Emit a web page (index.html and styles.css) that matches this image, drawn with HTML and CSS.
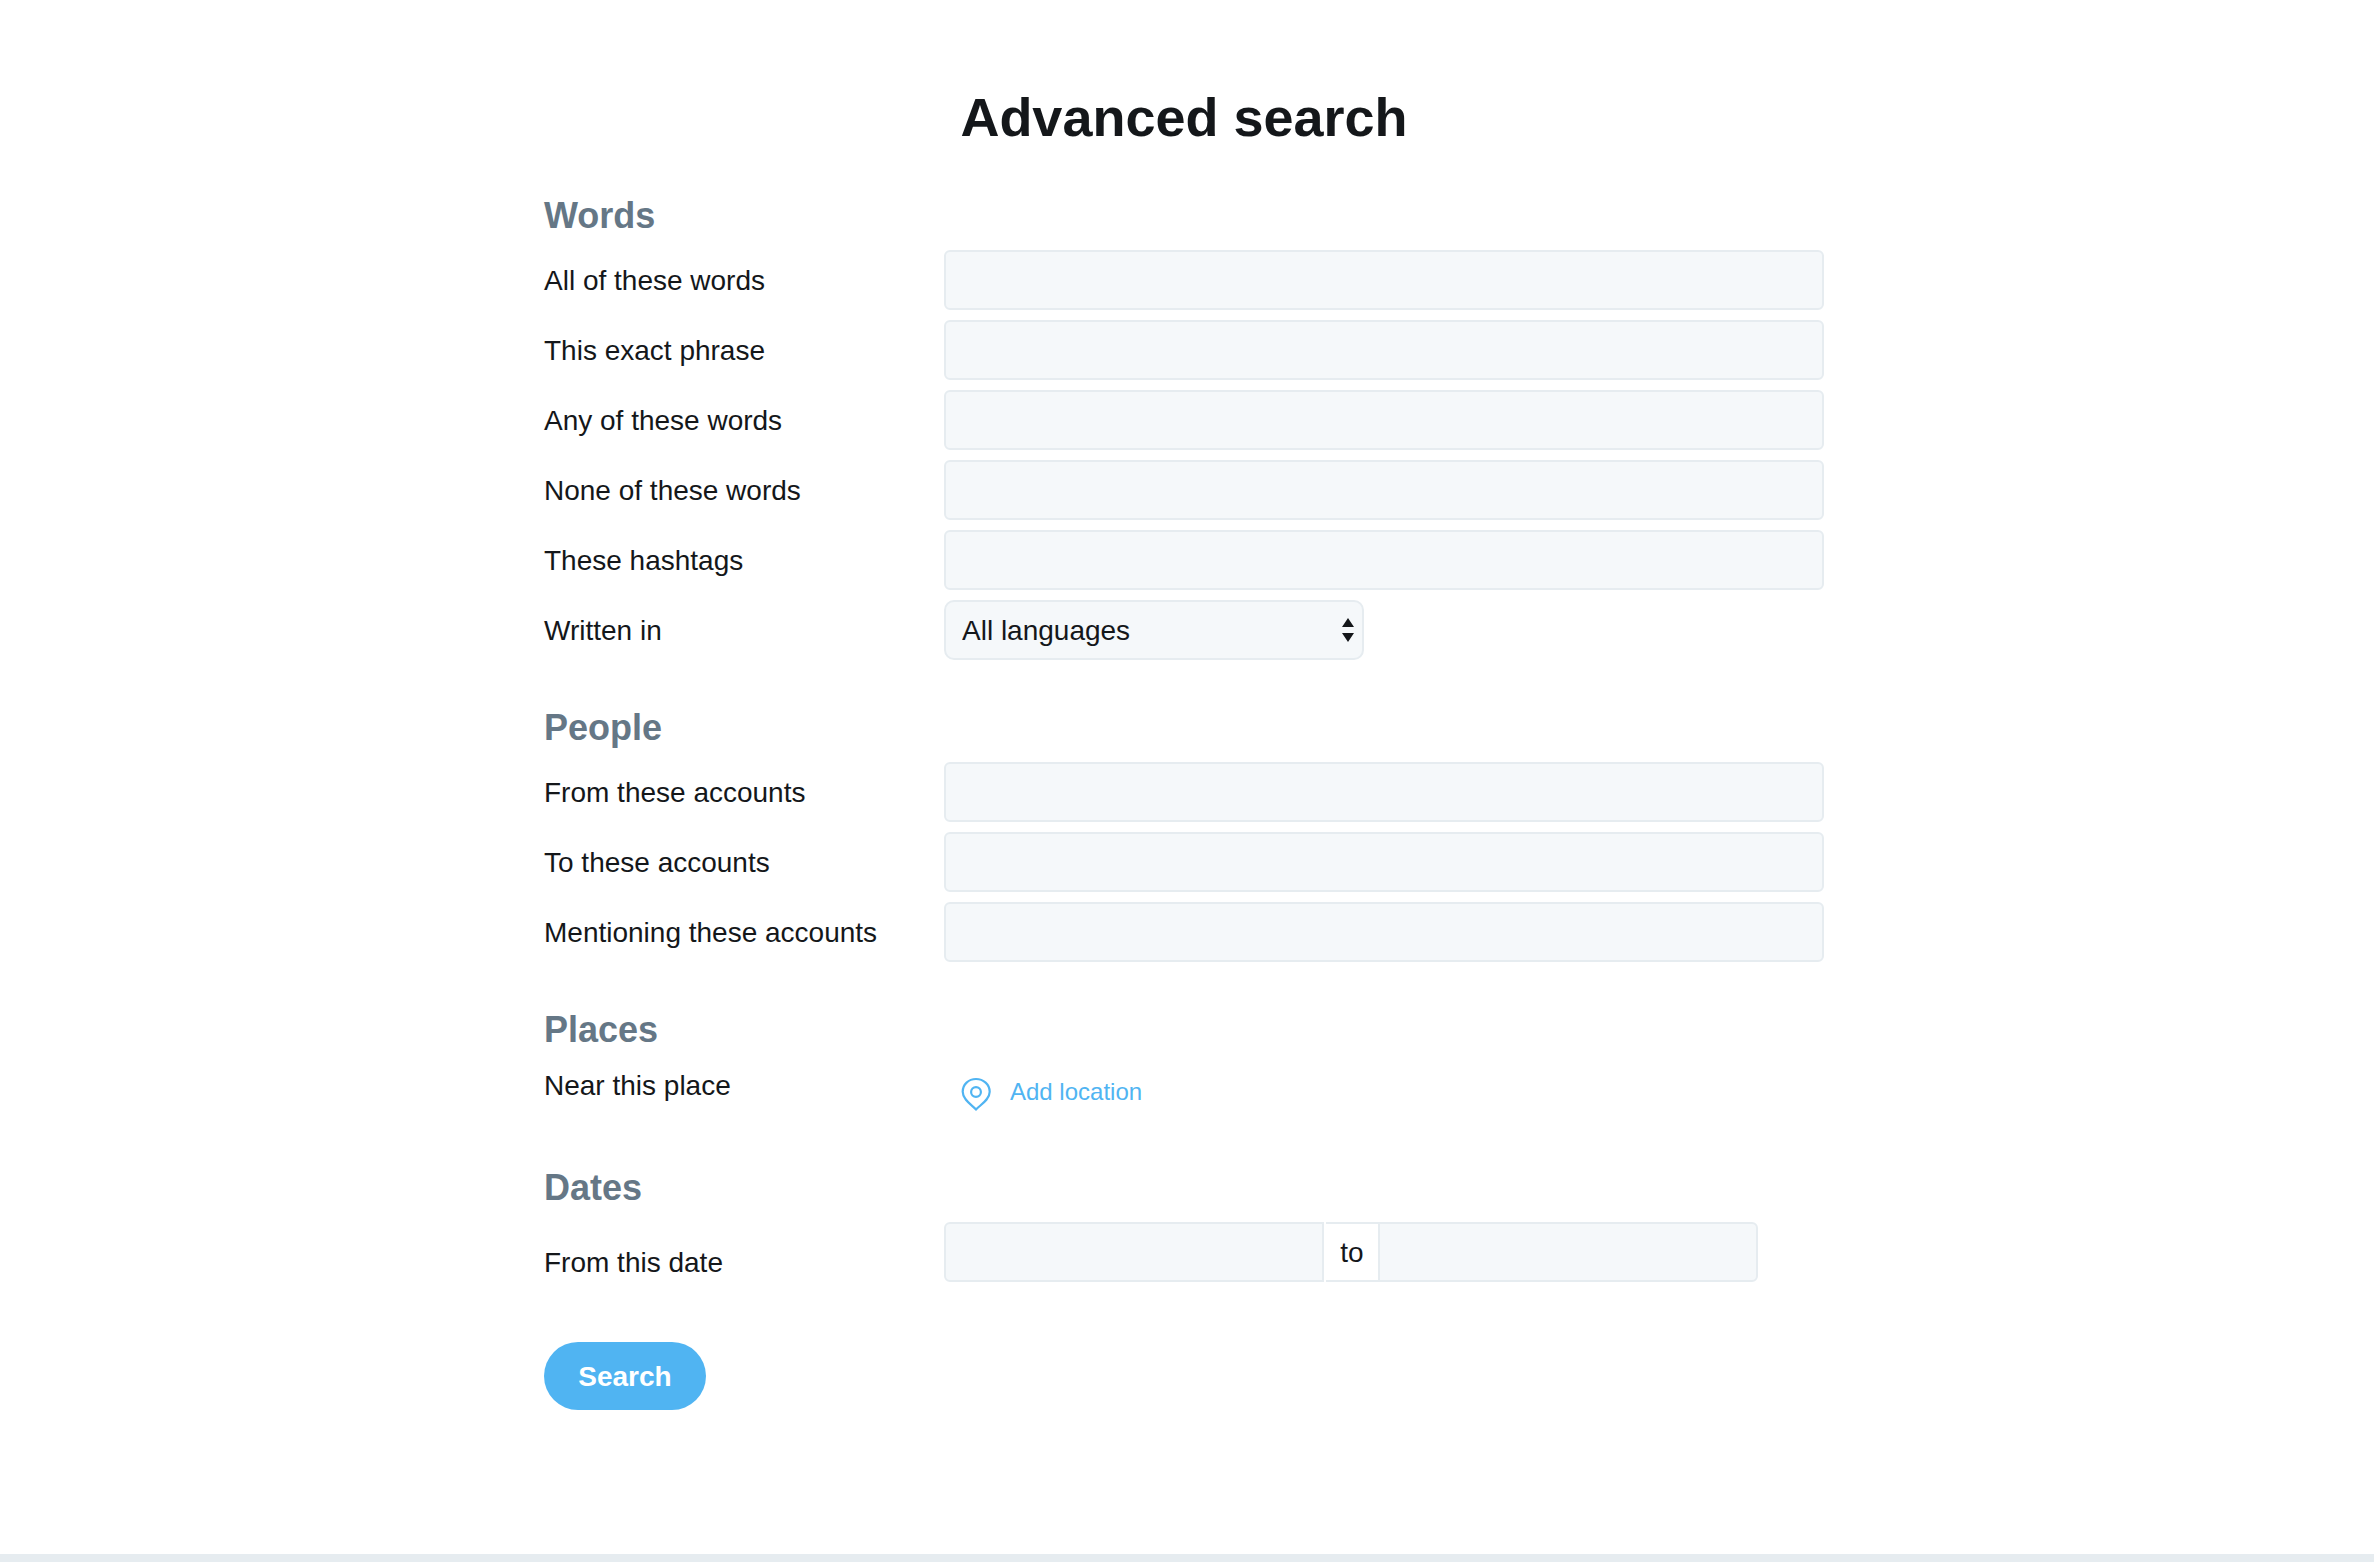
FILE: index.html
```html
<!DOCTYPE html>
<html lang="en">
<head>
<meta charset="utf-8">
<meta name="viewport" content="width=device-width, initial-scale=1">
<title>Advanced search</title>
<link rel="stylesheet" href="styles.css">
</head>
<body>
<main class="page">
  <form class="search-form">
    <h1 class="title">Advanced search</h1>

    <section class="group">
      <h2 class="group-title">Words</h2>
      <div class="rows">
        <div class="row"><label class="row-label" for="all">All of these words</label><input class="field" id="all" type="text"></div>
        <div class="row"><label class="row-label" for="phrase">This exact phrase</label><input class="field" id="phrase" type="text"></div>
        <div class="row"><label class="row-label" for="any">Any of these words</label><input class="field" id="any" type="text"></div>
        <div class="row"><label class="row-label" for="none">None of these words</label><input class="field" id="none" type="text"></div>
        <div class="row"><label class="row-label" for="tags">These hashtags</label><input class="field" id="tags" type="text"></div>
        <div class="row">
          <label class="row-label" for="lang">Written in</label>
          <div class="select-wrap">
            <select class="field select" id="lang"><option>All languages</option></select>
            <svg class="select-arrows" viewBox="0 0 12 24" aria-hidden="true"><path d="M6 0l6 9H0zM6 24l6-9H0z"/></svg>
          </div>
        </div>
      </div>
    </section>

    <section class="group">
      <h2 class="group-title">People</h2>
      <div class="rows">
        <div class="row"><label class="row-label" for="from">From these accounts</label><input class="field" id="from" type="text"></div>
        <div class="row"><label class="row-label" for="to">To these accounts</label><input class="field" id="to" type="text"></div>
        <div class="row"><label class="row-label" for="mention">Mentioning these accounts</label><input class="field" id="mention" type="text"></div>
      </div>
    </section>

    <section class="group">
      <h2 class="group-title">Places</h2>
      <div class="row row-place">
        <label class="row-label" for="near">Near this place</label>
        <button class="location" id="near" type="button">
          <svg class="pin" viewBox="0 0 32 38" aria-hidden="true">
            <path d="M16 36.400C12 32.200 2.700 27 2.700 18.800C2.700 11.400 8.600 6 16 6S29.700 11.400 29.700 18.800C29.700 27 20 32.200 16 36.400Z"/>
            <circle cx="16" cy="19" r="4.900"/>
          </svg>
          <span>Add location</span>
        </button>
      </div>
    </section>

    <section class="group">
      <h2 class="group-title">Dates</h2>
      <div class="row row-dates">
        <label class="row-label" for="since">From this date</label>
        <div class="dates">
          <input class="field date-start" id="since" type="text">
          <label class="date-to" for="until">to</label>
          <input class="field date-end" id="until" type="text">
        </div>
      </div>
    </section>

    <button class="submit" type="submit">Search</button>
  </form>
</main>
</body>
</html>
```
FILE: styles.css
```css
* {
  box-sizing: border-box;
}

body {
  margin: 0;
  background: #fff;
  color: #14171a;
  font-family: "Liberation Sans", Arial, sans-serif;
  font-size: 28px;
  line-height: 40px;
}

input,
select,
button {
  margin: 0;
  font: inherit;
  color: inherit;
}

.page {
  min-height: 100vh;
  padding: 87px 30px 144px 24px;
  border-bottom: 8px solid #e6ecf0;
}

.search-form {
  max-width: 1280px;
  margin: 0 auto;
}

.title {
  margin: 0 0 47px;
  font-size: 54px;
  line-height: 60px;
  text-align: center;
}

.group {
  margin-bottom: 46px;
}

.group:last-of-type {
  margin-bottom: 40px;
}

.group-title {
  margin: 0 0 12px;
  color: #657786;
  font-size: 36px;
  line-height: 44px;
}

.rows {
  display: grid;
  gap: 10px;
}

.row {
  display: grid;
  grid-template-columns: 400px minmax(0, 1fr);
  align-items: center;
}

.row-label {
  padding-top: 2px;
}

.field {
  display: block;
  width: 100%;
  height: 60px;
  padding: 0 16px;
  border: 2px solid #e6ecf0;
  border-radius: 6px;
  background: #f5f8fa;
}

.select-wrap {
  position: relative;
  width: 100%;
  max-width: 420px;
}

.select {
  padding-top: 2px;
  border-radius: 10px;
  appearance: none;
}

.select-arrows {
  position: absolute;
  top: 18px;
  right: 10px;
  width: 12px;
  height: 24px;
  fill: #14171a;
  pointer-events: none;
}

.row-place {
  min-height: 56px;
  align-items: start;
}

.location {
  display: flex;
  align-items: center;
  justify-self: start;
  gap: 18px;
  height: 56px;
  padding: 0 16px;
  border: 0;
  background: none;
  color: #50b4f2;
  font-size: 24px;
}

.pin {
  width: 32px;
  height: 38px;
  fill: none;
  stroke: currentColor;
  stroke-width: 2.2;
}

.row-dates {
  min-height: 80px;
}

.dates {
  display: flex;
  align-self: start;
  width: 100%;
  max-width: 814px;
}

.date-start {
  flex: 1;
  min-width: 0;
  border-radius: 6px 0 0 6px;
}

.date-to {
  width: 52px;
  margin-left: 2px;
  padding-top: 1px;
  border: solid #e6ecf0;
  border-width: 2px 0;
  line-height: 55px;
  text-align: center;
}

.date-end {
  flex: 1;
  min-width: 0;
  border-radius: 0 6px 6px 0;
}

.submit {
  display: block;
  min-width: 162px;
  height: 68px;
  padding: 2px 34px 0;
  border: 0;
  border-radius: 34px;
  background: #50b4f2;
  color: #fff;
  font-weight: bold;
}
```
